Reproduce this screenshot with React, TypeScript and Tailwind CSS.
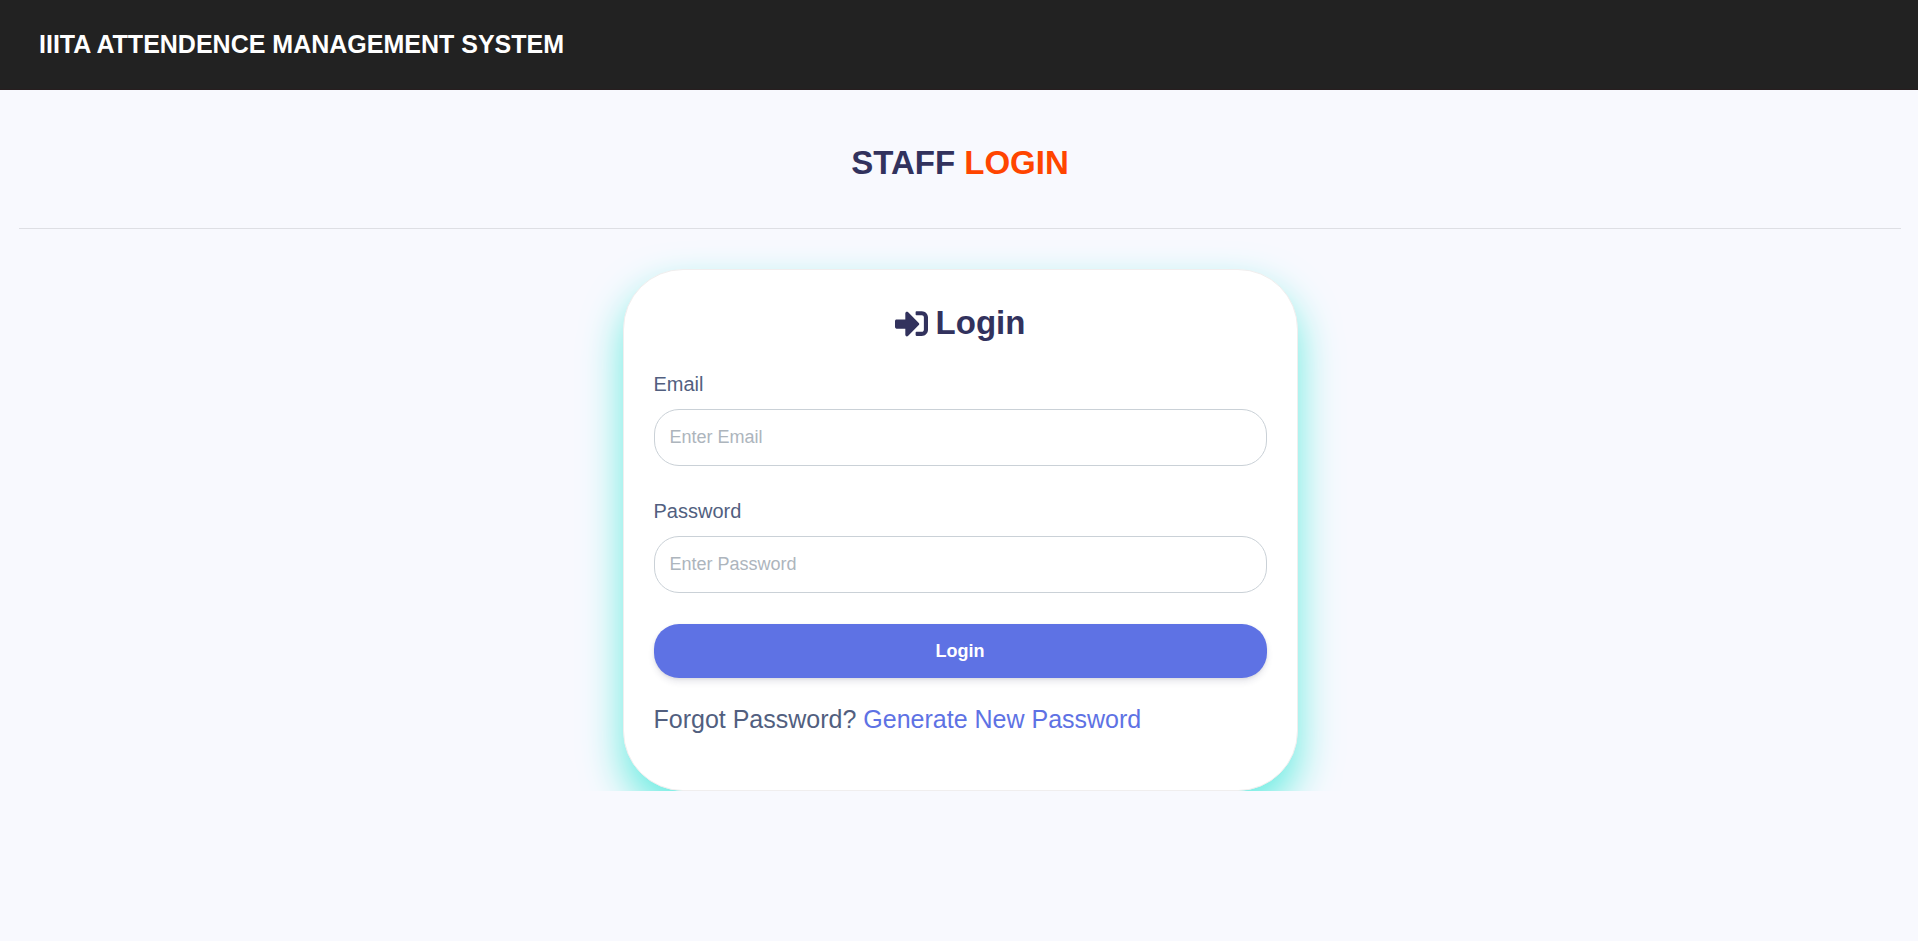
import { FaSignInAlt } from "react-icons/fa";

type FieldProps = {
  id: string;
  label: string;
  type: string;
  placeholder: string;
};

function Field({ id, label, type, placeholder }: FieldProps) {
  return (
    <div className="flex flex-col gap-[10px]">
      <label htmlFor={id} className="text-[20px] leading-[30px]">
        {label}
      </label>
      <input
        id={id}
        name={id}
        type={type}
        placeholder={placeholder}
        className="h-[57px] w-full rounded-[25px] border border-[#cad1d7] bg-white px-[15px] text-[18px] placeholder:text-[#adb5bd] focus:border-[#5e72e4] focus:outline-none"
      />
    </div>
  );
}

export default function App() {
  return (
    <div className="min-h-screen bg-[#f8f9fe] font-['Liberation_Sans',Arial,sans-serif] text-[#525f7f]">
      <header className="border-b border-[#271e1f] bg-[#222222] px-[39px] pt-6 pb-[25px]">
        <h1 className="text-[25px] leading-10 font-bold text-white">
          IIITA ATTENDENCE MANAGEMENT SYSTEM
        </h1>
      </header>

      <main className="pr-[17px] pl-[19px]">
        <h2 className="pt-[49px] pb-[41px] text-center text-[33px] leading-[48px] font-semibold text-[#32325d]">
          STAFF <span className="text-[#ff4500]">LOGIN</span>
        </h2>
        <hr className="border-black/10" />

        <section className="flex justify-center overflow-hidden pt-10">
          <div className="w-full max-w-[675px] rounded-[60px] border border-[#f0eeee] bg-white px-[30px] pt-[29px] pb-[53px] shadow-[0_20px_40px_#66ece0]">
            <h3 className="flex items-center justify-center gap-2 text-[33px] leading-[48px] font-semibold text-[#32325d]">
              <FaSignInAlt aria-hidden="true" />
              Login
            </h3>

            <form
              className="mt-[22px] flex flex-col gap-[30px]"
              onSubmit={(event) => event.preventDefault()}
            >
              <Field id="email" label="Email" type="email" placeholder="Enter Email" />
              <Field id="password" label="Password" type="password" placeholder="Enter Password" />
              <button
                type="submit"
                className="mt-px h-[54px] w-full rounded-[25px] bg-[#5e72e4] text-[18px] font-semibold text-white shadow-[0_4px_6px_rgba(50,50,93,0.11),0_1px_3px_rgba(0,0,0,0.08)]"
              >
                Login
              </button>
            </form>

            <p className="mt-[23px] text-[25px] leading-9">
              Forgot Password?{" "}
              <a href="#reset" className="text-[#5e72e4]">
                Generate New Password
              </a>
            </p>
          </div>
        </section>
      </main>
    </div>
  );
}
